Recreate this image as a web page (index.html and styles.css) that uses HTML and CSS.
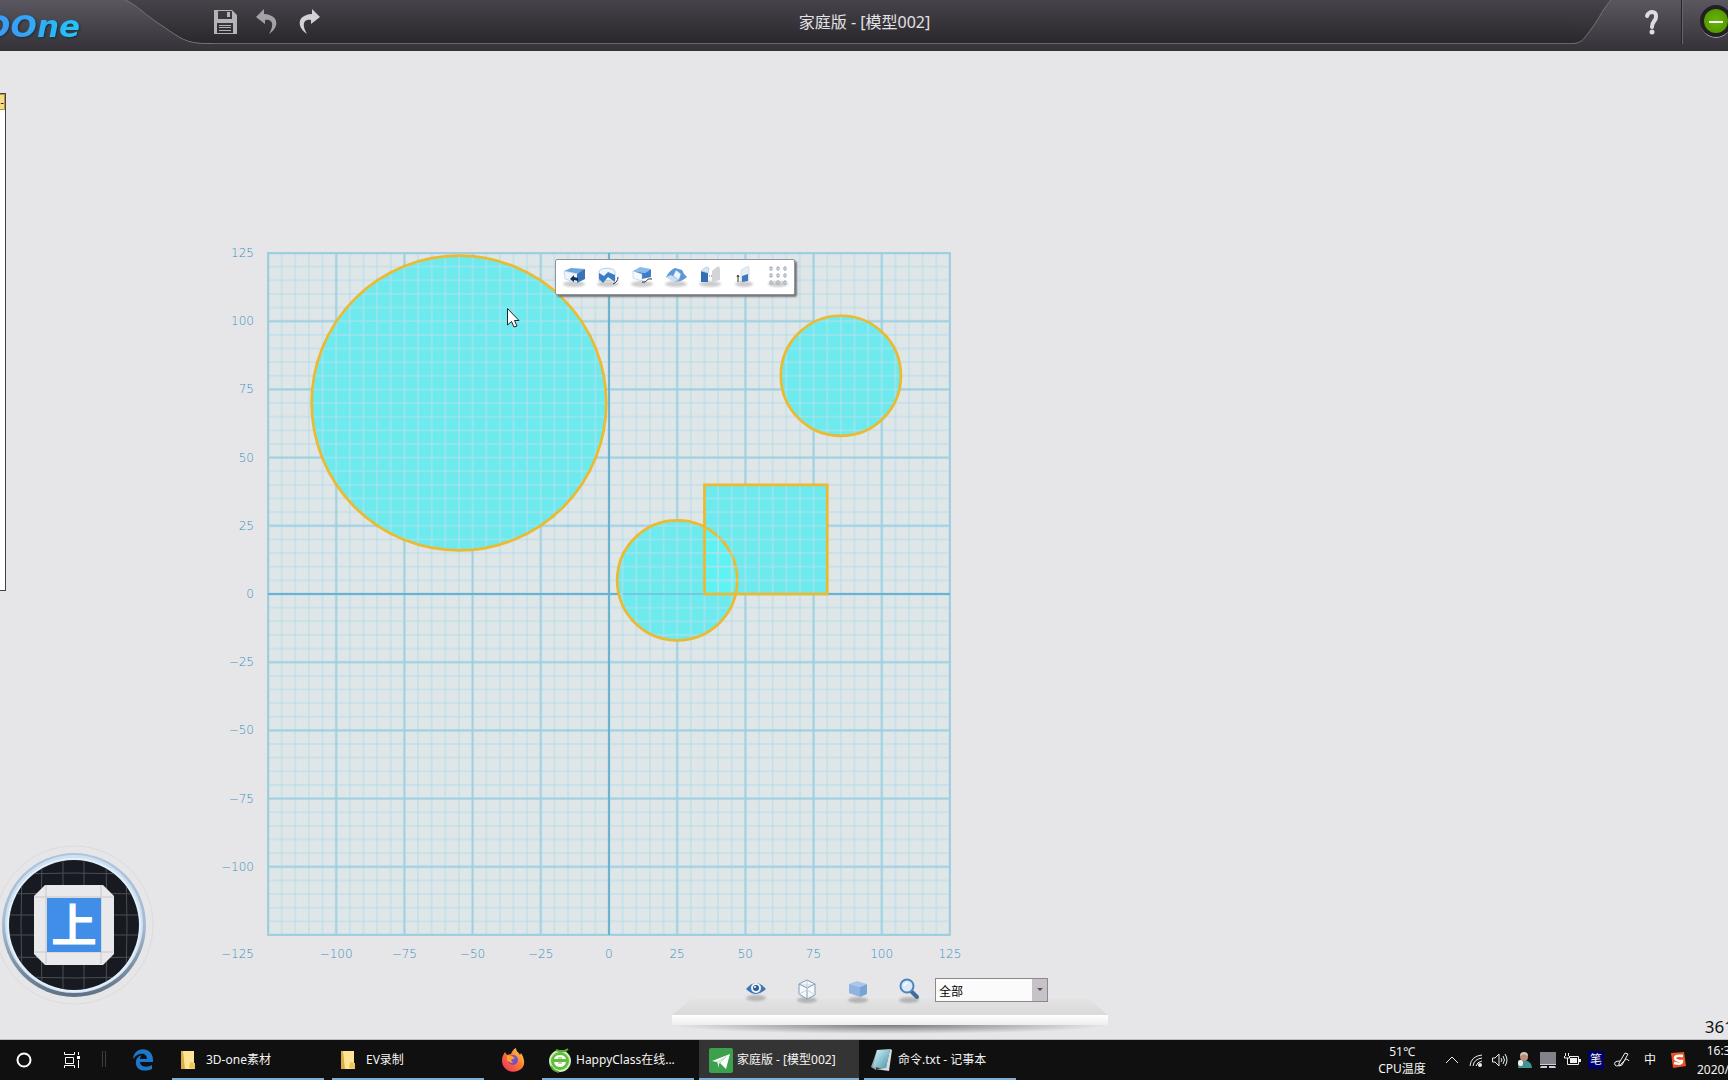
FILE: index.html
```html
<!DOCTYPE html>
<html lang="zh-CN">
<head>
<meta charset="utf-8">
<title>家庭版 - [模型002]</title>
<link rel="stylesheet" href="styles.css">
</head>
<body>
<header class="titlebar">
  <div class="logo"><span>DOne</span></div>
  <svg class="cap-left" viewBox="0 0 90 51" aria-hidden="true">
    <defs><linearGradient id="dark" x1="0" y1="0" x2="0" y2="44" gradientUnits="userSpaceOnUse"><stop offset="0" stop-color="#46434a"/><stop offset="1" stop-color="#29272c"/></linearGradient></defs>
    <path d="M3 0C14 4 24 16 42 27C58 38 64 43 82 43H90V0Z" fill="url(#dark)"/>
    <path d="M3 0C14 4 24 16 42 27C58 38 64 43 82 43.5H90" fill="none" stroke="#747179"/>
  </svg>
  <div class="title-center">
    <button class="tool save" aria-label="保存"><svg width="24" height="26" viewBox="0 0 24 26"><path fill="#b4b3b7" fill-rule="evenodd" d="M1 1H19L24 6V25H1ZM5 2V10H19V2ZM4 14V24H20V14Z"/><path fill="#b4b3b7" d="M14 3h3v5h-3zM6 16h12v1H6zM6 18h12v1H6zM6 21h12v1H6z"/></svg></button>
    <button class="tool" aria-label="撤销"><svg width="24" height="26" viewBox="0 0 24 26"><path fill="#a3a2a6" d="M9 0L1 8L10 15V11C17 10 20 15 14 25C24 19 25 6 9 5Z"/></svg></button>
    <button class="tool" aria-label="重做"><svg width="24" height="26" viewBox="0 0 24 26"><path fill="#d2d1d5" d="M15 0L23 8L14 15V11C7 10 4 15 10 25C0 19-1 6 15 5Z"/></svg></button>
    <h1>家庭版 - [模型002]</h1>
  </div>
  <svg class="cap-right" viewBox="0 0 42 51" aria-hidden="true">
    <path d="M0 43C10 44 13 37 20 28C28 17 32 7 39 0H0Z" fill="url(#dark)"/>
    <path d="M0 43.5C10 44 13 37 20 28C28 17 32 7 39 0" fill="none" stroke="#747179"/>
  </svg>
  <div class="window-tools">
    <button class="help" aria-label="帮助"><svg width="16" height="26" viewBox="0 0 16 26"><path d="M3 7C4 2 13 1 12 8C12 12 8 12 8 18" fill="none" stroke="#dddce0" stroke-width="4" stroke-linecap="round"/><circle cx="8" cy="23" r="2.500" fill="#dddce0"/></svg></button>
    <button class="minimize" aria-label="最小化"><svg width="32" height="34" viewBox="0 0 32 34"><defs><radialGradient id="gr"><stop offset="0" stop-color="#68b50a"/><stop offset="1" stop-color="#559a00"/></radialGradient></defs><circle cx="16" cy="18" r="15" fill="#aaa8ad"/><circle cx="16" cy="16" r="16" fill="#222025"/><circle cx="16" cy="16" r="12" fill="url(#gr)"/><path d="M9 17H23" stroke="#fff" stroke-width="2"/></svg></button>
  </div>
</header>

<main class="workspace">
  <aside class="side-panel"><button aria-label="展开">-</button></aside>
  <section class="plot">
    <div class="y-axis"><span>125</span><span>100</span><span>75</span><span>50</span><span>25</span><span>0</span><span>−25</span><span>−50</span><span>−75</span><span>−100</span></div>
    <svg class="sheet" viewBox="-125 -125 250 250">
      <defs>
        <pattern id="minor" x="-2.500" y="-2.500" width="5" height="5" patternUnits="userSpaceOnUse"><path d="M2.500 0V5M0 2.500H5" stroke="#afdae8" stroke-width=".32"/></pattern>
        <pattern id="major" x="-12.500" y="-12.500" width="25" height="25" patternUnits="userSpaceOnUse"><path d="M12.500 0V25M0 12.500H25" stroke="#9dd0e1" stroke-width=".7"/></pattern>
        <pattern id="inner" x="-2.500" y="-2.500" width="5" height="5" patternUnits="userSpaceOnUse"><path d="M2.500 0V5M0 2.500H5" stroke="#b5dfec" stroke-width=".4"/></pattern>
      </defs>
      <rect x="-125" y="-125" width="250" height="250" fill="#dfe6e8"/>
      <rect x="-125" y="-125" width="250" height="250" fill="url(#minor)"/>
      <rect x="-125" y="-125" width="250" height="250" fill="url(#major)" stroke="#9fcedf" stroke-width=".7"/>
      <path d="M0-125V125M-125 0H125" stroke="#68b2d2" stroke-width=".7"/>
      <g fill="#6deaee"><circle cx="-55" cy="-70" r="54"/><circle cx="85" cy="-80" r="22"/><circle cx="25" cy="-5" r="22"/><rect x="35" y="-40" width="45" height="40"/></g>
      <path d="M35 0V-24.600A22 22 0 0 1 46.400 0Z" fill="#5cf3f2"/>
      <g fill="url(#inner)" stroke="#ecba30" stroke-width="1"><circle cx="-55" cy="-70" r="54"/><circle cx="85" cy="-80" r="22"/><circle cx="25" cy="-5" r="22"/><rect x="35" y="-40" width="45" height="40"/></g>
      <path d="M5 0H34.500" stroke="#62c3e0" stroke-width=".6"/>
    </svg>
    <span class="x-first">−125</span>
    <div class="x-axis"><span>−100</span><span>−75</span><span>−50</span><span>−25</span><span>0</span><span>25</span><span>50</span><span>75</span><span>100</span><span>125</span></div>
  </section>

  <div class="shape-tools">
    <button aria-label="拉伸"><svg viewBox="0 0 28 28"><ellipse class="shade" cx="14" cy="20" rx="11" ry="3"/><path fill="#6ea4dc" d="M4 7L11 4L25 5L20 10Z"/><path fill="#eef5fc" stroke="#9dbde0" stroke-width=".5" d="M4 7L18 10V19L5 15Z"/><path fill="#3c72b8" d="M17 10L25 5V15L17 19Z"/><path fill="#173058" d="M10 15L14 11V13L18 14V17L14 16V18Z"/></svg></button>
    <button aria-label="旋转"><svg viewBox="0 0 28 28"><ellipse class="shade" cx="14" cy="20" rx="11" ry="3"/><path fill="#eef5fc" stroke="#9dbde0" stroke-width=".7" d="M5 8C5 3 21 3 21 8V16L5 17Z"/><path fill="#3f7bc2" d="M5 9L10 12L14 8L21 11V18L14 13L9 19L5 15Z"/><path fill="none" stroke="#333" d="M19 20Q24 18 24 13"/></svg></button>
    <button aria-label="扫掠"><svg viewBox="0 0 28 28"><ellipse class="shade" cx="14" cy="20" rx="11" ry="3"/><path fill="#8bbce8" d="M5 7L12 3L23 5L17 9Z"/><path fill="#3d7cc8" d="M5 7L17 9L23 5V13L14 15Z"/><path fill="#f5f9fd" stroke="#9dbde0" stroke-width=".5" d="M5 7L14 10V17L5 14Z"/><path fill="none" stroke="#252525" d="M14 18C20 19 17 14 24 15"/></svg></button>
    <button aria-label="放样"><svg viewBox="0 0 28 28"><ellipse class="shade" cx="14" cy="20" rx="11" ry="3"/><path fill="#5f98d2" d="M4 13Q8 6 13 4L20 6Q22 11 25 13Q18 19 12 17Z"/><path fill="#edf4fc" stroke="#6f9bca" stroke-width=".5" d="M11 12L14 6L19 10L17 16Z"/><path fill="#cadef3" d="M4 13L9 11L17 16L11 18Z"/></svg></button>
    <button aria-label="镜像"><svg viewBox="0 0 28 28"><ellipse class="shade" cx="14" cy="20" rx="11" ry="3"/><path fill="#336fb4" d="M5 7L12 9V18L5 18Z"/><path fill="#d5e6f6" stroke="#8cb1da" stroke-width=".5" d="M5 7L10 3L13 4L12 9Z"/><path fill="#d3d3d8" d="M16 7L22 2L24 4V16L16 18Z"/><path stroke="#496f9c" stroke-dasharray="1 1" d="M13 12h4"/></svg></button>
    <button aria-label="移动"><svg viewBox="0 0 28 28"><ellipse class="shade" cx="14" cy="20" rx="9" ry="3"/><path fill="#e9eef5" stroke="#b3c4d7" stroke-width=".5" d="M11 6L18 2L19 4V16L11 18Z"/><path fill="#4078bd" d="M12 12L18 10V17L12 18Z"/><path fill="none" stroke="#333" d="M8 18V12M7 13L8 11L9 13"/></svg></button>
    <button aria-label="阵列"><svg viewBox="0 0 28 28"><ellipse class="shade" cx="14" cy="20" rx="10" ry="3"/><g fill="#fff" stroke="#98a3b3"><path d="M6 3h2v3h-2zM13 3h2v3h-2zM20 3h2v3h-2zM6 10h2v3h-2zM13 10h2v3h-2zM20 10h2v3h-2zM6 17h2v3h-2zM13 17h2v3h-2zM20 17h2v3h-2z"/></g></svg></button>
  </div>
  <svg class="cursor" viewBox="0 0 13 20" aria-hidden="true"><path d="M.5.5V17L4.500 13.500L7 19L10 18L7.500 12.500H12Z" fill="#fff" stroke="#20242b"/></svg>

  <button class="navigator" aria-label="上">
    <svg viewBox="0 0 160 160">
      <defs><linearGradient id="ring" x1="0" y1="0" x2="0" y2="1"><stop offset="0" stop-color="#aec5dc"/><stop offset=".5" stop-color="#a6bbd2"/><stop offset="1" stop-color="#5e7083"/></linearGradient><clipPath id="disc"><circle cx="80" cy="80" r="65"/></clipPath></defs>
      <circle cx="80" cy="80" r="79" fill="none" stroke="#dcdadb"/>
      <circle cx="80" cy="80" r="72" fill="url(#ring)"/><circle cx="80" cy="79" r="69" fill="#cfe0f0"/><circle cx="80" cy="80" r="67" fill="#e4f1fc"/><circle cx="80" cy="80" r="65" fill="#171a21"/>
      <g clip-path="url(#disc)" fill="none" stroke="#4b4e55"><path d="M48 10Q46 80 48 150M69 10V150M90 10V150M112 10Q114 80 112 150M28 20Q26 80 28 140M132 20Q134 80 132 140M10 49Q80 47 150 49M10 70H150M10 90H150M10 112Q80 114 150 112M20 29Q80 27 140 29M20 132Q80 134 140 132"/></g>
      <path d="M51 40H109L120 51V109L109 120H51L40 109V51Z" fill="#e9e8ea"/><path d="M52 40V119M107 40V119M40 52H119M40 107H119" stroke="#c9c7c8"/>
      <rect x="53" y="53" width="54" height="54" fill="#418ee9"/>
      <text x="80" y="97" text-anchor="middle">上</text>
    </svg>
  </button>

  <section class="dock">
    <div class="dock-tools">
      <button aria-label="显示"><svg viewBox="0 0 28 28"><ellipse class="shade" cx="14" cy="22" rx="10" ry="3"/><path fill="#4177b4" d="M4 13Q14 1 24 13Q14 23 4 13Z"/><circle cx="14" cy="12" r="5" fill="#edf4fb"/><circle cx="14" cy="12" r="3" fill="#315f98"/><circle cx="13" cy="11" r="1" fill="#fff"/></svg></button>
      <button aria-label="线框"><svg viewBox="0 0 28 28"><ellipse class="shade" cx="14" cy="24" rx="10" ry="3"/><path fill="#f5f9fc" stroke="#809bb5" stroke-linejoin="round" d="M14 4L22 8V19L14 23L6 18V8ZM6 8L14 12L22 8M14 12V23"/><path stroke="#c5d2df" fill="none" d="M14 5V14L6 18M14 14L22 19"/></svg></button>
      <button aria-label="着色"><svg viewBox="0 0 28 28"><ellipse class="shade" cx="14" cy="24" rx="10" ry="3"/><path fill="#a9c8e9" d="M5 8L13 5L23 8L16 11Z"/><path fill="#8fb4df" d="M5 8L16 11V21L5 17Z"/><path fill="#7aa3d4" d="M16 11L23 8V18L16 21Z"/></svg></button>
      <button aria-label="缩放"><svg viewBox="0 0 28 28"><ellipse class="shade" cx="14" cy="24" rx="10" ry="3"/><path stroke="#426a9c" stroke-width="4" stroke-linecap="round" d="M17 16L22 21"/><circle cx="12" cy="10" r="6.500" fill="#d9eaf9" stroke="#4f83c0" stroke-width="2"/><path fill="none" stroke="#fff" stroke-width="1.500" d="M9 10Q10 7 13 7"/></svg></button>
      <label class="filter"><select aria-label="选择过滤"><option>全部</option></select><i></i></label>
    </div>
    <svg class="shelf" viewBox="0 0 438 38" aria-hidden="true">
      <defs><linearGradient id="top" x1="0" y1="0" x2="0" y2="1"><stop offset="0" stop-color="#e3e3e4"/><stop offset="1" stop-color="#d9d9da"/></linearGradient><linearGradient id="lip" x1="0" y1="0" x2="0" y2="1"><stop offset="0" stop-color="#fff"/><stop offset="1" stop-color="#ededee"/></linearGradient><radialGradient id="under" cx=".5" cy="0" r=".5" gradientTransform="matrix(1 0 0 2 0 0)"><stop offset="0" stop-color="#79797b"/><stop offset="1" stop-color="#79797b" stop-opacity="0"/></radialGradient></defs>
      <path fill="url(#top)" d="M20 0H418L437 16H1Z"/><rect x="1" y="26" width="436" height="9" fill="url(#under)"/><rect x="1" y="16" width="436" height="10" fill="url(#lip)"/>
    </svg>
  </section>
  <output class="readout">361</output>
</main>

<footer class="taskbar">
  <button class="sys search" aria-label="Cortana"><svg width="18" height="18"><circle cx="9" cy="9" r="6.500" fill="none" stroke="#fff" stroke-width="2"/></svg></button>
  <button class="sys" aria-label="任务视图"><svg width="18" height="18" viewBox="0 0 18 18"><path fill="none" stroke="#fff" d="M1.500 1V3.500H11.500V1M2.500 6.500H10.500V12.500H2.500ZM1.500 17V14.500H11.500V17M15.500 1V4M15.500 9V17"/><rect x="14" y="5" width="3" height="3" fill="#fff"/></svg></button>
  <span class="divider"></span>
  <button class="sys edge" aria-label="Edge"><svg width="22" height="22" viewBox="0 0 22 22"><path fill="#1c78cc" d="M1 10C2-3 21-3 21 11V13H8C8 18 15 19 20 16V20C11 24 3 20 4 13C4 9 7 7 10 6C8 8 8 9 8 10H15C15 3 6 3 1 10Z"/></svg></button>
  <button class="task"><svg class="folder" viewBox="0 0 16 22"><path fill="#d9ac47" d="M1 2H10V20H1Z"/><path fill="#ffe394" d="M3 2H14V14L15 20H5Z"/><path fill="#edc55f" d="M10 13L15 14V20L9 19Z"/></svg>3D-one素材</button>
  <button class="task"><svg class="folder" viewBox="0 0 16 22"><path fill="#d9ac47" d="M1 2H10V20H1Z"/><path fill="#ffe394" d="M3 2H14V14L15 20H5Z"/><path fill="#edc55f" d="M10 13L15 14V20L9 19Z"/></svg>EV录制</button>
  <button class="sys fox" aria-label="Firefox"><svg width="24" height="26" viewBox="0 0 24 26"><defs><linearGradient id="fx" x1="1" y1="0" x2="0" y2="1"><stop offset="0" stop-color="#ffe34b"/><stop offset=".45" stop-color="#ff7b31"/><stop offset="1" stop-color="#e92763"/></linearGradient></defs><path fill="url(#fx)" d="M1 13C1 9 3 7 4 5L6 8L10 7Q12 2 15 1C15 5 18 5 19 8L20 6C30 22 14 28 6 23C2 20 1 17 1 13Z"/><circle cx="12" cy="13" r="5" fill="#7551c4"/><path fill="#ff9e2c" d="M6 8L11 9L14 11L10 13L12 16Q8 16 6 13Z"/></svg></button>
  <button class="task happy"><svg class="icon" viewBox="0 0 24 26"><circle cx="12" cy="14" r="10" fill="#62bd3c" stroke="#cceeb7" stroke-width="2"/><path fill="#fff" d="M6 12Q7 8 12 8T18 12ZM6 15H18Q17 20 12 20T6 15Z"/><path d="M10 11h4M10 16h4" stroke="#62bd3c"/><path d="M8 3Q16 6 20 2M3 19Q5 24 11 25" stroke="#55a92f" stroke-width="2" fill="none"/></svg>HappyClass在线...</button>
  <button class="task active"><svg class="icon" viewBox="0 0 24 26"><rect y="1" width="24" height="25" rx="2" fill="#3ba14c"/><path fill="#fff" d="M3 14L21 7L17 22L11 16L18 9L8 15Z"/><path fill="#d9ede0" d="M8 15L18 9L10 17V21Z"/></svg>家庭版 - [模型002]</button>
  <button class="task"><svg class="icon note" viewBox="0 0 24 26"><defs><linearGradient id="nt" x1="0" y1="0" x2="1" y2="1"><stop offset="0" stop-color="#e0f8fb"/><stop offset="1" stop-color="#3d91a8"/></linearGradient></defs><path fill="#8da5ad" d="M7 3L1 20L6 23Z"/><path fill="url(#nt)" d="M7 3L20 2L16 22L3 20Z"/><path fill="#d9dedc" d="M20 2L22 3L19 24L5 22L16 21Z"/></svg>命令.txt - 记事本</button>

  <div class="tray">
    <div class="temp"><span>51℃</span><span>CPU温度</span></div>
    <button aria-label="显示隐藏的图标"><svg viewBox="0 0 18 18"><path class="line" d="M3 12L9 6L15 12"/></svg></button>
    <button aria-label="网络"><svg viewBox="0 0 18 18"><path class="line" d="M3 15Q4 5 15 4M6 15Q7 8 15 7M9 15Q10 11 15 10"/><circle cx="13" cy="14" r="2" fill="#eee"/></svg></button>
    <button aria-label="音量"><svg viewBox="0 0 18 18"><path class="line" d="M1.500 7V11H4L8 15V3L4 7ZM10 7Q12 9 10 11M12 5Q15 9 12 13M14 3Q18 9 14 15"/></svg></button>
    <button aria-label="用户"><svg viewBox="0 0 18 18"><path fill="#3f9491" d="M3 17Q3 11 10 9Q17 11 17 17Z"/><circle cx="9" cy="6" r="4" fill="#b98d78"/><path fill="#cfc9c7" d="M5 5Q5 1 9 1T13 5L9 3Z"/><rect x="3" y="9" width="5" height="6" rx="2" fill="#f0eeee"/></svg></button>
    <button aria-label="显示器"><svg viewBox="0 0 18 18"><rect x="1" y="1" width="16" height="12" fill="#85818a"/><path fill="#d0ced4" d="M1 13H17V14H1ZM2 15H8V17H1ZM10 15H16L17 17H10Z"/></svg></button>
    <button aria-label="电源"><svg viewBox="0 0 18 18"><path class="line" d="M6.500 5.500H15.500V13.500H4.500V9M2.500 2V5M5.500 2V5M1.500 5V7H6.500V5M4.500 7V9"/><rect x="7" y="7" width="7" height="5" fill="#eee"/><rect x="16" y="8" width="2" height="3" fill="#eee"/></svg></button>
    <span class="ime">笔</span>
    <button class="wide" aria-label="手写笔"><svg viewBox="0 0 18 18"><path class="line" d="M6 12L12 2L15 3L9 14L6 15ZM7 10Q0 10 2 14Q5 17 10 11Q14 6 16 10"/></svg></button>
    <span class="wide">中</span>
    <button class="wide" aria-label="搜狗输入法"><svg viewBox="0 0 18 18"><path fill="#e75325" d="M2 2L15 1L17 15L4 17Z"/><path fill="none" stroke="#fff" stroke-width="2.500" d="M14 5Q6 4 6 7T13 10Q13 14 5 12"/></svg></button>
    <div class="clock"><span>16:30</span><span>2020/4/1</span></div>
  </div>
</footer>
</body>
</html>
```
FILE: styles.css
```css
* { box-sizing: border-box; }
body {
  margin: 0;
  min-height: 100vh;
  display: grid;
  grid-template-rows: 51px 1fr 40px;
  grid-template-columns: minmax(0, 1fr);
  overflow: hidden;
  background: #e6e6e8;
  font: 12px/16px "Noto Sans", "Noto Sans CJK SC", sans-serif;
}
button { padding: 0; border: 0; background: none; color: inherit; font: inherit; }
svg { display: block; flex: none; }
.shade { fill: #000; opacity: .2; filter: blur(1px); }

.titlebar {
  display: flex;
  background: linear-gradient(#5a5760, #343138);
  color: #e3e2e5;
  overflow: hidden;
}
.logo { width: 122px; padding-right: 42px; display: flex; justify-content: flex-end; overflow: hidden; }
.logo span {
  font: italic bold 31px/52px "DejaVu Sans", sans-serif;
  background: linear-gradient(100deg, #3a9df4 30%, #22c8f8);
  background-clip: text;
  color: transparent;
  filter: drop-shadow(1px 1px 1px #1b2b3c);
}
.cap-left { width: 90px; height: 51px; }
.cap-right { width: 42px; height: 51px; }
.title-center {
  flex: 1;
  height: 44px;
  display: flex;
  align-items: center;
  gap: 18px;
  padding-left: 1px;
  border-bottom: 1px solid #68656d;
  background: linear-gradient(#46434a, #29272c);
}
.title-center h1 { flex: 1; margin: 0; padding-right: 182px; text-align: center; font-size: 16px; line-height: 24px; font-weight: 400; }
.tool { width: 24px; }
.window-tools { width: 114px; height: 44px; display: flex; align-items: center; }
.help { width: 67px; padding-left: 30px; height: 26px; }
.minimize { width: 47px; height: 44px; padding-left: 18px; border-left: 1px solid #25232a; box-shadow: inset 1px 0 #69666e; overflow: hidden; }

.workspace { position: relative; overflow: hidden; padding-top: 202px; border-bottom: 1px solid #bdbdc0; }
.side-panel { position: absolute; left: 0; top: 42px; width: 6px; height: 498px; background: #fff; border: 1px solid #444; border-left: 0; }
.side-panel button { width: 5px; height: 16px; background: #f8dc83; border: 1px solid #b7963f; border-left: 0; display: block; font-size: 10px; line-height: 12px; overflow: hidden; }

.plot {
  display: grid;
  grid-template-columns: 254px 682px;
  grid-template-rows: 682px 34px;
  column-gap: 14px;
  color: #3791c4;
  font: 200 12px/16px "DejaVu Sans", sans-serif;
}
.y-axis { display: grid; grid-template-rows: repeat(10, 1fr); text-align: right; margin: -8px 0 8px; }
.sheet { width: 100%; height: 100%; overflow: visible; }
.x-first { padding-top: 11px; text-align: right; }
.x-axis { display: grid; grid-template-columns: repeat(10, 1fr); margin: 0 -34px 0 34px; padding-top: 11px; text-align: center; }

.shape-tools {
  position: absolute;
  left: 555px;
  top: 208px;
  display: flex;
  height: 36px;
  background: #fff;
  border: 1px solid #9292a5;
  border-radius: 2px;
  box-shadow: 2px 2px 2px #777;
}
.shape-tools button { width: 34px; padding: 2px 0 0 4px; }
.shape-tools svg { width: 28px; height: 28px; }
.cursor { position: absolute; left: 507px; top: 257px; width: 13px; height: 20px; }
.navigator { position: absolute; left: -6px; bottom: 34px; width: 160px; height: 160px; }
.navigator text { fill: #fff; font: 700 46px "Noto Sans CJK SC", sans-serif; }

.dock { width: 438px; margin: 7px auto 0; position: relative; left: 26px; }
.dock-tools { position: relative; z-index: 1; display: flex; align-items: center; height: 28px; padding-left: 71px; gap: 23px; margin-bottom: -5px; }
.dock-tools button, .dock-tools button svg { width: 28px; height: 28px; }
.filter { position: relative; margin-left: -11px; height: 24px; }
.filter select { appearance: none; width: 113px; height: 24px; padding: 0 20px 0 3px; border: 1px solid #8b898e; border-radius: 0; background: linear-gradient(90deg, #fbfbfc 96px, #c6c2c8 96px); font: 12px "Noto Sans CJK SC", sans-serif; color: #000; }
.filter i { position: absolute; right: 5px; top: 10px; border: 3px solid transparent; border-top-color: #555; pointer-events: none; }
.shelf { width: 438px; height: 38px; }
.readout { position: absolute; right: -6px; bottom: 2px; font-size: 17px; line-height: 20px; color: #111; }

.taskbar { display: flex; background: #101010; color: #f4f4f4; overflow: hidden; white-space: nowrap; }
.sys { width: 48px; display: flex; align-items: center; justify-content: center; flex: none; }
.divider { width: 4px; margin: 11px 0 13px 6px; border: 1px solid #3d3d3d; border-width: 0 1px; }
.edge { width: 66px; padding-left: 8px; }
.fox { width: 58px; margin-left: -8px; }
.task { width: 152px; margin-right: 8px; padding: 2px 0 0 8px; display: flex; align-items: center; gap: 10px; flex: none; border-bottom: 2px solid #7fadd9; }
.task.happy { margin-right: 5px; }
.task .folder { width: 16px; height: 22px; }
.task .icon { width: 24px; height: 26px; }
.task:has(.icon) { padding-left: 6px; gap: 4px; }
.task.active { width: 160px; margin-right: 5px; padding-left: 10px; background: #343434; }
.tray { margin-left: auto; width: 352px; display: flex; align-items: center; flex: none; }
.temp { width: 52px; margin-right: 12px; flex: none; display: grid; text-align: center; line-height: 17px; }
.tray button, .ime { width: 24px; flex: none; display: flex; justify-content: center; }
.tray svg { width: 18px; height: 18px; }
.line { fill: none; stroke: #eee; stroke-width: 1; }
.tray .ime { width: 16px; height: 18px; margin: 0 4px; background: #00006b; line-height: 18px; }
.tray .wide { width: 28px; text-align: center; flex: none; }
.clock { width: 58px; margin-left: 1px; flex: none; display: grid; line-height: 19px; text-align: center; }
```
